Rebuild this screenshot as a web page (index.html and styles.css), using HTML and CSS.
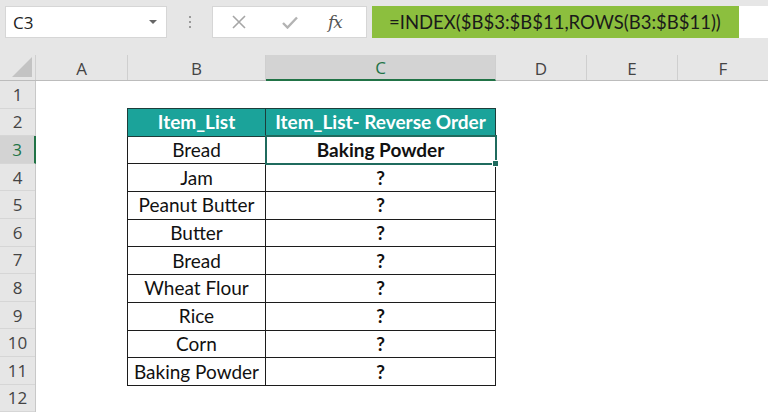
FILE: index.html
```html
<!DOCTYPE html>
<html>
<head>
<meta charset="utf-8">
<link rel="stylesheet" href="styles.css">
</head>
<body>
<div class="app">
  <div class="toolbar">
    <div class="namebox"><span class="ref">C3</span><span class="caret"></span></div>
    <div class="dots"><i></i><i></i><i></i></div>
    <div class="fxbox">
      <svg class="ico" width="14" height="14" viewBox="0 0 14 14"><path d="M1 1L13 13M13 1L1 13" stroke="#a6a6a6" stroke-width="1.6" fill="none"/></svg>
      <svg class="ico" width="16" height="13" viewBox="0 0 16 13"><path d="M1 7L5.5 11.5L15 1.5" stroke="#b3b3b3" stroke-width="2.4" fill="none"/></svg>
      <span class="fx">fx</span>
    </div>
    <div class="formula"><span class="hl">=INDEX($B$3:$B$11,ROWS(B3:$B$11))</span></div>
  </div>
  <div class="colheads">
    <div class="corner"><span class="tri"></span></div>
    <div class="ch w-a">A</div>
    <div class="ch w-b">B</div>
    <div class="ch w-c active">C</div>
    <div class="ch w-d">D</div>
    <div class="ch w-e">E</div>
    <div class="ch w-f">F</div>
  </div>
  <div class="sheet">
    <div class="rowheads">
      <div class="rh">1</div>
      <div class="rh">2</div>
      <div class="rh active">3</div>
      <div class="rh">4</div>
      <div class="rh">5</div>
      <div class="rh">6</div>
      <div class="rh">7</div>
      <div class="rh">8</div>
      <div class="rh">9</div>
      <div class="rh">10</div>
      <div class="rh">11</div>
      <div class="rh">12</div>
    </div>
    <div class="cells">
      <table class="data">
        <colgroup><col class="cb"><col class="cc"></colgroup>
        <tr class="head"><th>Item_List</th><th>Item_List- Reverse Order</th></tr>
        <tr><td>Bread</td><td class="sel b">Baking Powder</td></tr>
        <tr><td>Jam</td><td class="b">?</td></tr>
        <tr><td>Peanut Butter</td><td class="b">?</td></tr>
        <tr><td>Butter</td><td class="b">?</td></tr>
        <tr><td>Bread</td><td class="b">?</td></tr>
        <tr><td>Wheat Flour</td><td class="b">?</td></tr>
        <tr><td>Rice</td><td class="b">?</td></tr>
        <tr><td>Corn</td><td class="b">?</td></tr>
        <tr><td>Baking Powder</td><td class="b">?</td></tr>
      </table>
    </div>
  </div>
</div>
</body>
</html>
```
FILE: styles.css
```css
* { box-sizing: border-box; }
html, body { margin: 0; padding: 0; }
body { width: 768px; height: 412px; overflow: hidden; background: #fff; font-family: "Open Sans", sans-serif; }
.app { width: 768px; height: 412px; overflow: hidden; }

.toolbar {
  height: 55px;
  background: #e6e6e6;
  display: flex;
  align-items: flex-start;
  padding-top: 6px;
  padding-left: 5px;
}
.namebox {
  width: 162px; height: 32px;
  background: #fff;
  border: 1px solid #d6d6d6;
  display: flex; align-items: center; justify-content: space-between;
  padding: 0 9px 0 7px;
}
.ref { font-family: "Open Sans", sans-serif; font-size: 17px; color: #222; }
.caret { width: 0; height: 0; border-left: 4px solid transparent; border-right: 4px solid transparent; border-top: 4px solid #666; }
.dots {
  width: 45px; height: 32px;
  display: flex; flex-direction: column; align-items: center; justify-content: center; gap: 3px;
}
.dots i { display: block; width: 2px; height: 2px; background: #9a9a9a; }
.fxbox {
  width: 155px; height: 32px;
  background: #fff;
  border: 1px solid #d6d6d6;
  display: flex; align-items: center;
  padding-left: 19px;
}
.fxbox .ico:first-child { margin-right: 36px; }
.fxbox .ico + .ico { margin-right: 30px; }
.fx { font-family: "DejaVu Serif", serif; font-style: italic; font-size: 17px; color: #555; letter-spacing: -1px; }
.formula {
  flex: 1; height: 32px;
  margin-left: 5px;
  background: #fff;
  display: flex; align-items: stretch;
}
.hl {
  background: #8cbf3e;
  width: 367px;
  display: flex; align-items: center;
  padding-left: 17px;
  font-family: "Lato", sans-serif; font-size: 18.5px; color: #1a1a1a;
}

.colheads {
  height: 26px;
  display: flex;
  background: #e6e6e6;
  border-bottom: 1px solid #bcbcbc;
}
.corner { width: 36px; position: relative; border-right: 1px solid #d0d0d0; }
.tri {
  position: absolute; right: 3px; bottom: 3px;
  width: 0; height: 0;
  border-left: 20px solid transparent;
  border-bottom: 20px solid #c3c3c3;
}
.ch {
  display: flex; align-items: center; justify-content: center;
  font-size: 17px; color: #444;
  border-right: 1px solid #cfcfcf;
  padding-top: 1px;
}
.ch.active { background: #d3d3d3; color: #217346; border-bottom: 2px solid #217346; margin-bottom: -1px; }
.w-a { width: 92px; }
.w-b { width: 138px; }
.w-c { width: 230px; }
.w-d { width: 91px; }
.w-e { width: 91px; }
.w-f { width: 90px; border-right: none; }

.sheet { display: flex; }
.rowheads { width: 36px; background: #e6e6e6; border-right: 1px solid #c8c8c8; }
.rh {
  height: 27.6px;
  display: flex; align-items: center; justify-content: center;
  font-size: 17px; color: #444;
  border-bottom: 1px solid #d6d6d6;
}
.rh.active { background: #d3d3d3; color: #217346; border-right: 2px solid #217346; margin-right: -1px; }

.cells { flex: 1; padding-left: 91px; padding-top: 27px; }
.data { border-collapse: collapse; table-layout: fixed; font-family: "Lato", sans-serif; font-size: 19px; color: #111; }
.cb { width: 138px; }
.cc { width: 230px; }
.data th, .data td {
  height: 27.7px; padding: 0;
  border: 1px solid #1c1c1c;
  text-align: center;
  vertical-align: middle;
  line-height: 20px;
}
.data th { background: #1ba39a; color: #fff; font-weight: 700; border-color: #1d3d3a; }
.data td.b { font-weight: 700; }
.data td.sel { position: relative; outline: 2px solid #1f6b5e; outline-offset: -1px; }
.data td.sel::after {
  content: ""; position: absolute; right: -4px; bottom: -4px;
  width: 5px; height: 5px; background: #1f6b5e; border: 1px solid #fff;
}
```
